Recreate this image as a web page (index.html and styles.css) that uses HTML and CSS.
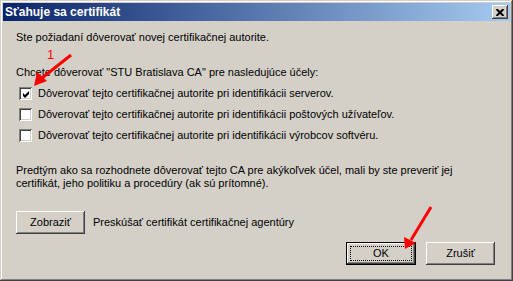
FILE: index.html
```html
<!DOCTYPE html>
<html lang="sk">
<head>
  <meta charset="UTF-8">
  <title>Sťahuje sa certifikát</title>
  <link rel="stylesheet" href="styles.css">
</head>
<body>
  <div class="window">
    <!-- Titulok okna -->
    <div class="titlebar">
      <span class="title">Sťahuje sa certifikát</span>
      <button class="close" aria-label="Zavrieť">
        <svg width="8" height="7" viewBox="0 0 8 7"><path d="M0.5 0 L7.5 7 M7.5 0 L0.5 7" stroke="#000" stroke-width="2" fill="none"/></svg>
      </button>
    </div>

    <div class="content">
      <p class="intro">Ste požiadaní dôverovať novej certifikačnej autorite.</p>
      <p class="question">Chcete dôverovať "STU Bratislava CA" pre nasledujúce účely:</p>

      <div class="purposes">
        <label class="purpose">
          <span class="checkbox checked">
            <svg width="9" height="9" viewBox="0 0 9 9"><path d="M1 3 L3 5 L7 1 L7 4 L3 8 L1 6 Z" fill="#000"/></svg>
          </span>
          Dôverovať tejto certifikačnej autorite pri identifikácii serverov.
        </label>
        <label class="purpose">
          <span class="checkbox"></span>
          Dôverovať tejto certifikačnej autorite pri identifikácii poštových užívateľov.
        </label>
        <label class="purpose">
          <span class="checkbox"></span>
          Dôverovať tejto certifikačnej autorite pri identifikácii výrobcov softvéru.
        </label>
      </div>

      <p class="warning">Predtým ako sa rozhodnete dôverovať tejto CA pre akýkoľvek účel, mali by ste preveriť jej<br>certifikát, jeho politiku a procedúry (ak sú prítomné).</p>

      <div class="view-row">
        <button class="btn view">Zobraziť</button>
        <span>Preskúšať certifikát certifikačnej agentúry</span>
      </div>

      <div class="actions">
        <button class="btn default">OK</button>
        <button class="btn cancel">Zrušiť</button>
      </div>
    </div>

    <!-- Červené šípky (poznámky na snímke) -->
    <span class="note-num">1</span>
    <svg class="arrows" width="513" height="281" viewBox="0 0 513 281">
      <line x1="71" y1="55" x2="42" y2="78" stroke="#f00" stroke-width="3"/>
      <polygon points="34,86 37,72 47,81" fill="#f00"/>
      <line x1="431" y1="207" x2="411" y2="240" stroke="#f00" stroke-width="3"/>
      <polygon points="405,249 404,237 416,243" fill="#f00"/>
    </svg>
  </div>
</body>
</html>
```

FILE: styles.css
```css
/* Reset base */
* {
  box-sizing: border-box;
  margin: 0;
  padding: 0;
}
body {
  font-family: "Liberation Sans", Arial, sans-serif;
  font-size: 11px;
  line-height: 13px;
  color: #000;
  background: #d4d0c8;
}
/* Okno v štýle Windows classic */
.window {
  position: relative;
  width: 513px;
  height: 281px;
  padding: 3px;
  background: #d4d0c8;
  box-shadow: inset -1px -1px #404040, inset 1px 1px #d4d0c8,
              inset -2px -2px #808080, inset 2px 2px #fff;
}
.titlebar {
  display: flex;
  align-items: center;
  justify-content: space-between;
  height: 18px;
  padding: 0 2px;
  background: linear-gradient(to right, #0a246a, #a6caf0);
}
.title {
  color: #fff;
  font-weight: bold;
  font-size: 12px;
}
.close {
  display: flex;
  align-items: center;
  justify-content: center;
  width: 16px;
  height: 14px;
  border: none;
  background: #d4d0c8;
  box-shadow: inset -1px -1px #404040, inset 1px 1px #fff,
              inset -2px -2px #808080, inset 2px 2px #d4d0c8;
}
/* Obsah */
.content {
  padding: 10px 15px 0 13px;
}
.intro {
  margin-bottom: 22px;
}
.question {
  margin-bottom: 8px;
}
.purposes {
  display: flex;
  flex-direction: column;
  gap: 8px;
  margin-bottom: 22px;
}
.purpose {
  display: flex;
  align-items: center;
  height: 13px;
}
.checkbox {
  display: flex;
  align-items: center;
  justify-content: center;
  width: 13px;
  height: 13px;
  margin: 0 6px 0 3px;
  background: #fff;
  box-shadow: inset 1px 1px #808080, inset -1px -1px #fff,
              inset 2px 2px #404040, inset -2px -2px #d4d0c8;
}
.checkbox svg {
  margin: 1px 0 0 1px;
}
.warning {
  margin-bottom: 21px;
}
.view-row {
  display: flex;
  align-items: center;
  gap: 8px;
  margin-bottom: 8px;
}
/* Tlačidlá */
.btn {
  position: relative;
  display: flex;
  align-items: center;
  justify-content: center;
  width: 70px;
  height: 23px;
  border: none;
  background: #d4d0c8;
  font: inherit;
  color: #000;
  box-shadow: inset -1px -1px #404040, inset 1px 1px #fff,
              inset -2px -2px #808080, inset 2px 2px #d4d0c8;
}
.view {
  width: 69px;
}
.btn.default {
  box-shadow: inset 0 0 0 1px #000, inset -2px -2px #404040,
              inset 2px 2px #fff, inset -3px -3px #808080;
}
.btn.default::after {
  content: "";
  position: absolute;
  inset: 4px;
  border: 1px dotted #000;
}
.cancel {
  width: 69px;
}
.actions {
  display: flex;
  justify-content: flex-end;
  gap: 10px;
}
/* Poznámky */
.note-num {
  position: absolute;
  left: 47px;
  top: 48px;
  color: #f00;
  font-size: 13px;
}
.arrows {
  position: absolute;
  left: 0;
  top: 0;
  pointer-events: none;
}
```
